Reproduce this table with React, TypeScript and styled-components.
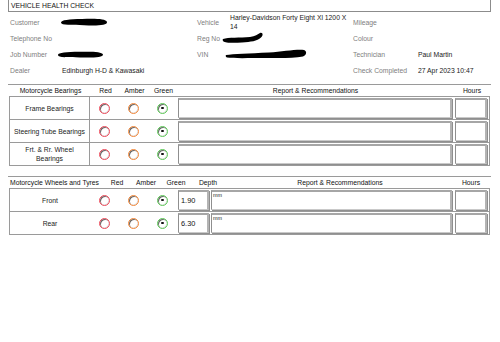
import styled, { createGlobalStyle } from "styled-components";

const GlobalStyle = createGlobalStyle`
  html, body {
    margin: 0;
    padding: 0;
    background: #fff;
  }
  body {
    font-family: "Liberation Sans", Arial, sans-serif;
    font-size: 6.8px;
    color: #222;
  }
`;

const Page = styled.div`
  width: 483px;
  margin-left: 8px;
`;

const TitleBar = styled.div`
  height: 12px;
  line-height: 12px;
  padding-left: 2px;
  border: 1px solid #8c8c8c;
  border-top: none;
  box-sizing: border-box;
  color: #111;
`;

const InfoGrid = styled.div`
  display: grid;
  grid-template-columns: 52px 135px 33px 123px 65px 1fr;
  grid-auto-rows: 16px;
  align-items: center;
  padding-left: 2px;
  margin-top: 2px;
`;

const Label = styled.div`
  color: #808080;
`;

const Value = styled.div`
  color: #1a1a1a;
  line-height: 9px;
  display: flex;
  align-items: center;
`;

const Table = styled.div<{ $gap: number }>`
  margin-top: ${(p) => p.$gap}px;
`;

const HeadRow = styled.div`
  display: flex;
  align-items: center;
  height: 12px;
  border-top: 1px solid #9a9a9a;
  box-sizing: border-box;
  padding-left: 2px;
  color: #111;
`;

const HeadCell = styled.div<{ $w: number; $align?: string }>`
  width: ${(p) => p.$w}px;
  flex: none;
  text-align: ${(p) => p.$align ?? "center"};
  white-space: nowrap;
`;

const Body = styled.div`
  margin-left: 1px;
  width: 481px;
  border: 1px solid #9a9a9a;
  border-bottom: none;
  box-sizing: border-box;
`;

const Row = styled.div`
  display: flex;
  align-items: center;
  height: 23px;
  border-bottom: 1px solid #9a9a9a;
  box-sizing: border-box;
`;

const RowLabel = styled.div<{ $divider?: boolean }>`
  width: 80px;
  height: 100%;
  flex: none;
  display: flex;
  align-items: center;
  justify-content: center;
  text-align: center;
  white-space: pre-line;
  line-height: 9px;
  color: #222;
  box-sizing: border-box;
  border-right: ${(p) => (p.$divider ? "1px solid #9a9a9a" : "none")};
`;

const RadioCell = styled.div`
  width: 29px;
  flex: none;
  display: flex;
  justify-content: center;
`;

const Radio = styled.span<{ $color: string; $checked?: boolean }>`
  position: relative;
  width: 11px;
  height: 11px;
  border-radius: 50%;
  border: 1.5px solid ${(p) => p.$color};
  box-sizing: border-box;
  background: #fff;
  box-shadow: inset 1px 1px 0 #6a6a6a, inset -0.5px -0.5px 0 #d8d8d8;
  &::after {
    content: "";
    display: ${(p) => (p.$checked ? "block" : "none")};
    position: absolute;
    left: 3px;
    top: 3px;
    width: 2.5px;
    height: 2.5px;
    border-radius: 50%;
    background: #111;
  }
`;

const Field = styled.div<{ $w: number; $ml: number }>`
  width: ${(p) => p.$w}px;
  margin-left: ${(p) => p.$ml}px;
  height: 20px;
  flex: none;
  box-sizing: border-box;
  background: #fff;
  border-top: 2px solid #a6a6a6;
  border-left: 1px solid #8f8f8f;
  border-right: 2px solid #b4b4b4;
  border-bottom: 1px solid #c9c9c9;
  box-shadow: 1px 1px 0 #8f8f8f;
`;

const DepthField = styled(Field)`
  display: flex;
  align-items: center;
  padding-left: 2px;
  font-size: 7.4px;
  color: #111;
`;

const UnitField = styled(Field)`
  font-size: 5.4px;
  line-height: 6px;
  padding-left: 1px;
  color: #222;
`;

const Blot = styled.svg<{ $ml: number }>`
  display: block;
  margin-left: ${(p) => p.$ml}px;
  flex: none;
`;

const colors = { red: "#ec4a5a", amber: "#f2873a", green: "#5cc956" };

const Radios = () => (
  <>
    <RadioCell>
      <Radio $color={colors.red} />
    </RadioCell>
    <RadioCell>
      <Radio $color={colors.amber} />
    </RadioCell>
    <RadioCell>
      <Radio $color={colors.green} $checked />
    </RadioCell>
  </>
);

const bearings = ["Frame Bearings", "Steering Tube Bearings", "Frt. & Rr. Wheel\nBearings"];
const wheels = [
  { name: "Front", depth: "1.90" },
  { name: "Rear", depth: "6.30" },
];

export default function App() {
  return (
    <>
      <GlobalStyle />
      <Page>
        <TitleBar>VEHICLE HEALTH CHECK</TitleBar>
        <InfoGrid>
          <Label>Customer</Label>
          <Value>
            <Blot $ml={-2} width="48" height="10" viewBox="0 0 48 10">
              <path d="M1 5.5 C1 3 9 2.2 22 2 C34 1.5 46 1.5 47 5 C47.5 8.5 36 9 24 8.2 C12 7.8 1 8.6 1 5.5 Z" fill="#000" />
            </Blot>
          </Value>
          <Label>Vehicle</Label>
          <Value>Harley-Davidson Forty Eight Xl 1200 X 14</Value>
          <Label>Mileage</Label>
          <Value />

          <Label>Telephone No</Label>
          <Value />
          <Label>Reg No</Label>
          <Value>
            <Blot $ml={-8} width="42" height="14" viewBox="0 0 42 14">
              <path d="M1 8 C6 6 18 7 28 6 C33 5.5 36 3 38 2 C41 1 41.5 4.5 39 6.5 C35 10 29 11 20 11.5 C12 12 3 12 1.5 10.5 C0.5 9.5 0.5 8.5 1 8 Z" fill="#000" />
            </Blot>
          </Value>
          <Label>Colour</Label>
          <Value />

          <Label>Job Number</Label>
          <Value>
            <Blot $ml={-5} width="47" height="9" viewBox="0 0 47 9">
              <path d="M1 5 C1 2.5 10 2 22 1.8 C34 1.5 45 1.5 46 4.5 C46.5 7.5 35 7.8 23 7.4 C11 7.2 1 7.8 1 5 Z" fill="#000" />
            </Blot>
          </Value>
          <Label>VIN</Label>
          <Value>
            <Blot $ml={-5} width="82" height="12" viewBox="0 0 82 12">
              <path d="M1 7 C8 6 24 5.5 44 4.5 C58 3.5 72 1 79 2 C82 2.8 82 7 78 8.5 C68 10.5 54 10 40 10 C24 10 8 10.5 2 9.5 C0.5 9 0.5 7.5 1 7 Z" fill="#000" />
            </Blot>
          </Value>
          <Label>Technician</Label>
          <Value>Paul Martin</Value>

          <Label>Dealer</Label>
          <Value>Edinburgh H-D &amp; Kawasaki</Value>
          <Label />
          <Value />
          <Label>Check Completed</Label>
          <Value>27 Apr 2023 10:47</Value>
        </InfoGrid>

        <Table $gap={6}>
          <HeadRow>
            <HeadCell $w={81}>Motorcycle Bearings</HeadCell>
            <HeadCell $w={29}>Red</HeadCell>
            <HeadCell $w={29}>Amber</HeadCell>
            <HeadCell $w={29}>Green</HeadCell>
            <HeadCell $w={275}>Report &amp; Recommendations</HeadCell>
            <HeadCell $w={38}>Hours</HeadCell>
          </HeadRow>
          <Body>
            {bearings.map((name) => (
              <Row key={name}>
                <RowLabel $divider>{name}</RowLabel>
                <Radios />
                <Field $w={274} $ml={1} />
                <Field $w={32} $ml={3} />
              </Row>
            ))}
          </Body>
        </Table>

        <Table $gap={10}>
          <HeadRow>
            <HeadCell $w={95} $align="left">Motorcycle Wheels and Tyres</HeadCell>
            <HeadCell $w={24}>Red</HeadCell>
            <HeadCell $w={34}>Amber</HeadCell>
            <HeadCell $w={26}>Green</HeadCell>
            <HeadCell $w={38}>Depth</HeadCell>
            <HeadCell $w={226}>Report &amp; Recommendations</HeadCell>
            <HeadCell $w={36}>Hours</HeadCell>
          </HeadRow>
          <Body>
            {wheels.map((w) => (
              <Row key={w.name}>
                <RowLabel>{w.name}</RowLabel>
                <Radios />
                <DepthField $w={31} $ml={1}>{w.depth}</DepthField>
                <UnitField $w={241} $ml={2}>mm</UnitField>
                <Field $w={32} $ml={3} />
              </Row>
            ))}
          </Body>
        </Table>
      </Page>
    </>
  );
}
